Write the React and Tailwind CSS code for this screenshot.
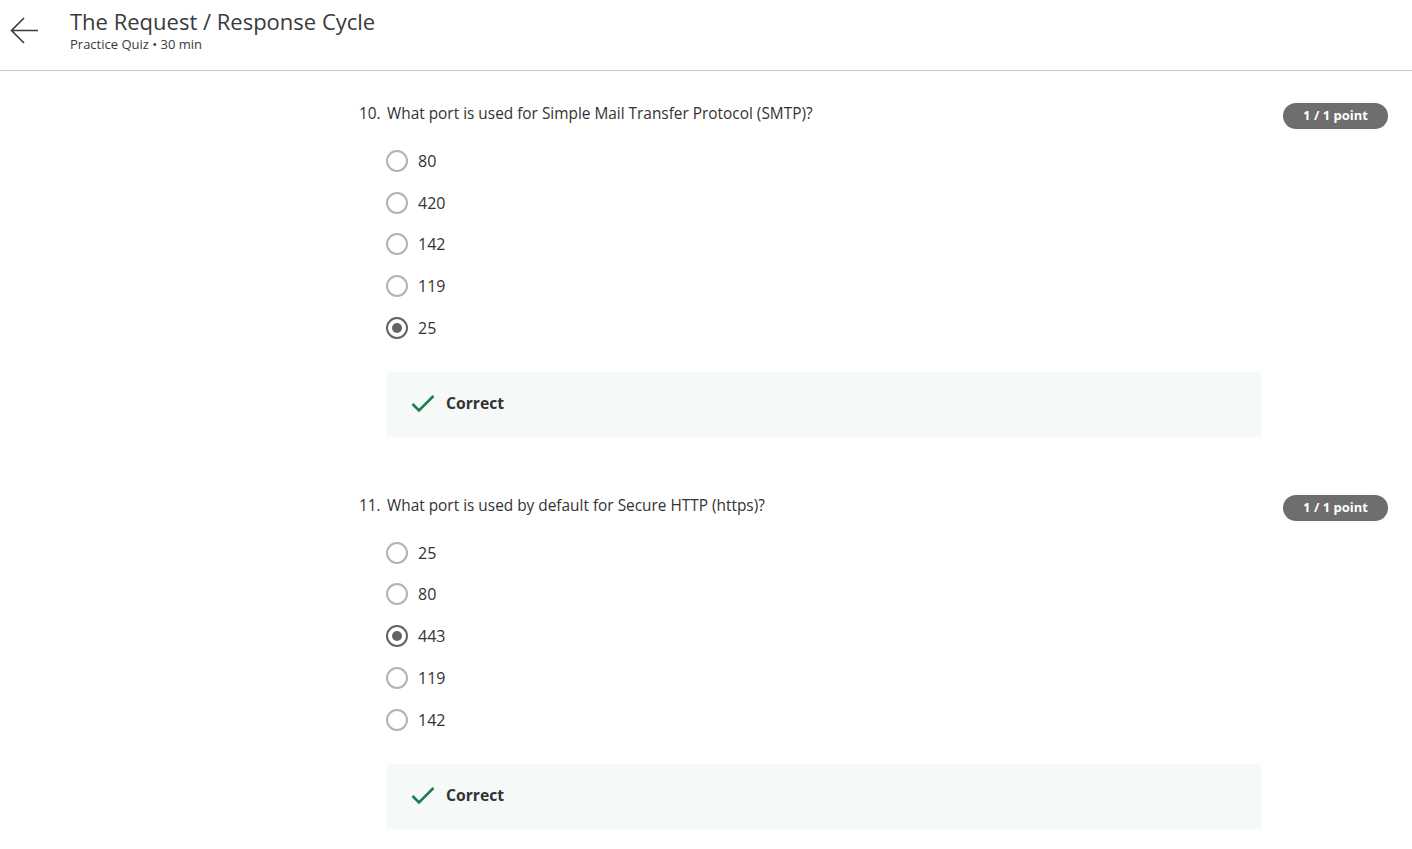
import React from "react";

const font = { fontFamily: '"Open Sans", "Noto Sans", sans-serif' };

function Radio({ checked }) {
  return checked ? (
    <span className="flex h-[22px] w-[22px] items-center justify-center rounded-full border-2 border-[#636363] bg-white">
      <span className="h-[10px] w-[10px] rounded-full bg-[#636363]" />
    </span>
  ) : (
    <span className="h-[22px] w-[22px] rounded-full border-2 border-[#b3b3b3] bg-white" />
  );
}

function Question({ num, text, options, selected }) {
  return (
    <div className="flex flex-col">
      <div className="flex items-start justify-between">
        <div className="flex text-[15.4px] leading-[24px] text-[#333]">
          <span className="w-[28px]">{num}.</span>
          <span>{text}</span>
        </div>
        <span className="mt-[1px] flex h-[26px] w-[105px] items-center justify-center rounded-full bg-[#6e6e6e] text-[13px] font-bold text-white">
          1 / 1 point
        </span>
      </div>
      <div className="mt-[11px] flex flex-col pl-[27px]">
        {options.map((o, i) => (
          <div key={i} className="flex h-[41.75px] items-center gap-[10px]">
            <Radio checked={o === selected} />
            <span className="text-[16px] text-[#333]">{o}</span>
          </div>
        ))}
      </div>
      <div className="ml-[28px] mt-[23px] flex h-[65px] w-[874px] items-center bg-[#f5f9f8] pl-[24px]">
        <svg width="24" height="20" viewBox="0 0 24 20" className="mr-[11px]">
          <path d="M1.5 10 L8 16.5 L22.5 2" fill="none" stroke="#1d7c50" strokeWidth="2.6" />
        </svg>
        <span className="text-[15.7px] font-bold text-[#333]">Correct</span>
      </div>
    </div>
  );
}

export default function App() {
  return (
    <div className="min-h-[849px] bg-white" style={font}>
      <header className="flex h-[71px] items-start border-b border-[#c6c6c6]">
        <div className="flex h-[62px] w-[70px] items-center pl-[10px]">
          <svg width="30" height="28" viewBox="0 0 30 28">
            <path d="M14 1 L1.5 13.5 L14 26 M1.5 13.5 L28 13.5" fill="none" stroke="#3b3b3b" strokeWidth="1.6" />
          </svg>
        </div>
        <div className="flex flex-col pt-[7px]">
          <span className="text-[22px] leading-[28px] text-[#373a3c]">The Request / Response Cycle</span>
          <span className="text-[13px] leading-[18px] text-[#373a3c]">Practice Quiz • 30 min</span>
        </div>
      </header>
      <main className="flex flex-col gap-[57px] pl-[359px] pr-[24px] pt-[31px]">
        <Question
          num={10}
          text="What port is used for Simple Mail Transfer Protocol (SMTP)?"
          options={["80", "420", "142", "119", "25"]}
          selected="25"
        />
        <Question
          num={11}
          text="What port is used by default for Secure HTTP (https)?"
          options={["25", "80", "443", "119", "142"]}
          selected="443"
        />
      </main>
    </div>
  );
}
